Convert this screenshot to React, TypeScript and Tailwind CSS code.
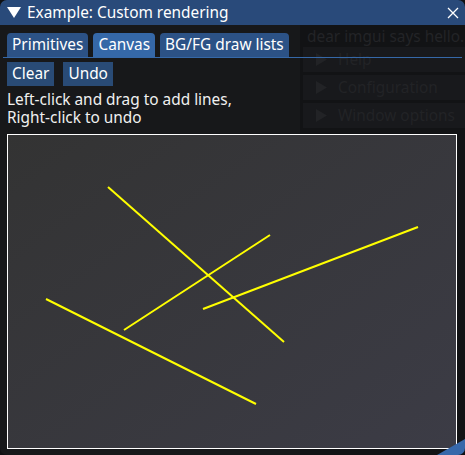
import React from "react";

const lines: [number, number, number, number][] = [
  [101, 53, 277, 208],
  [263, 101, 117, 196],
  [411, 93, 196, 175],
  [39, 165, 249, 270],
];

function GhostHeader({ label }: { label: string }) {
  return (
    <div className="h-[25px] bg-[#18191c] flex items-center pl-[12px] gap-[10px] text-[#222326]">
      <svg width="13" height="13" viewBox="0 0 13 13">
        <polygon points="1,0 12,6.5 1,13" fill="#222326" />
      </svg>
      <span>{label}</span>
    </div>
  );
}

export default function App() {
  return (
    <div
      className="w-[465px] h-[455px] relative overflow-hidden bg-[#101113] text-[15.4px] leading-[18px] text-[#ffffff]"
      style={{ fontFamily: '"Noto Sans", "Open Sans", sans-serif' }}
    >
      <div className="absolute inset-0 rounded-[7px] bg-[#17181a] overflow-hidden flex flex-col">
        {/* window behind, seen through */}
        <div className="absolute left-[300px] top-0 bottom-0 right-0 bg-[#121315] pt-[25px]">
          <div className="pl-[7px] pt-[1px] h-[22px] flex items-center text-[#232427] whitespace-nowrap">
            dear imgui says hello.
          </div>
          <div className="pl-[3px] flex flex-col gap-[3px] whitespace-nowrap">
            <GhostHeader label="Help" />
            <GhostHeader label="Configuration" />
            <GhostHeader label="Window options" />
          </div>
        </div>

        {/* title bar */}
        <div className="relative h-[25px] shrink-0 bg-[#294a7a] flex items-center pl-[7px] pr-[6px]">
          <svg width="14" height="11" viewBox="0 0 14 11" className="mr-[6px]">
            <polygon points="0,0 14,0 7,11" fill="#ffffff" />
          </svg>
          <span className="whitespace-nowrap">Example: Custom rendering</span>
          <svg width="12" height="12" viewBox="0 0 12 12" className="ml-auto">
            <path d="M1 1 L11 11 M11 1 L1 11" stroke="#ffffff" strokeWidth="1.3" />
          </svg>
        </div>

        {/* body */}
        <div className="relative flex-1 flex flex-col px-[7px]">
          <div className="flex gap-[5px] pt-[8px] h-[32px] items-end">
            <div className="h-[24px] px-[5px] flex items-center rounded-t-[4px] bg-[#2c5286]">Primitives</div>
            <div className="h-[24px] px-[5px] flex items-center rounded-t-[4px] bg-[#3568a8]">Canvas</div>
            <div className="h-[24px] px-[5px] flex items-center rounded-t-[4px] bg-[#2c5286]">BG/FG draw lists</div>
          </div>
          <div className="h-[1px] bg-[#3568a8] -mx-[4px]" />
          <div className="flex gap-[9px] mt-[4px]">
            <div className="h-[24px] px-[5px] flex items-center bg-[#294b76]">Clear</div>
            <div className="h-[24px] px-[5px] flex items-center bg-[#294b76]">Undo</div>
          </div>
          <div className="mt-[5px] text-[#f0f0f0] whitespace-nowrap">
            <div>Left-click and drag to add lines,</div>
            <div>Right-click to undo</div>
          </div>
          <div className="mt-[7px] h-[315px] w-[450px] relative border border-white bg-linear-to-br from-[#333333] to-[#3c3c46]">
            <svg className="absolute inset-0" width="448" height="313" viewBox="1 1 448 313">
              {lines.map(([x1, y1, x2, y2], i) => (
                <line key={i} x1={x1} y1={y1} x2={x2} y2={y2} stroke="#ffff00" strokeWidth="2" />
              ))}
            </svg>
          </div>
        </div>

        {/* resize grip */}
        <svg className="absolute right-0 bottom-0" width="28" height="16" viewBox="0 0 28 16">
          <polygon points="28,0 28,16 0,16" fill="#3768aa" />
        </svg>
      </div>
    </div>
  );
}
